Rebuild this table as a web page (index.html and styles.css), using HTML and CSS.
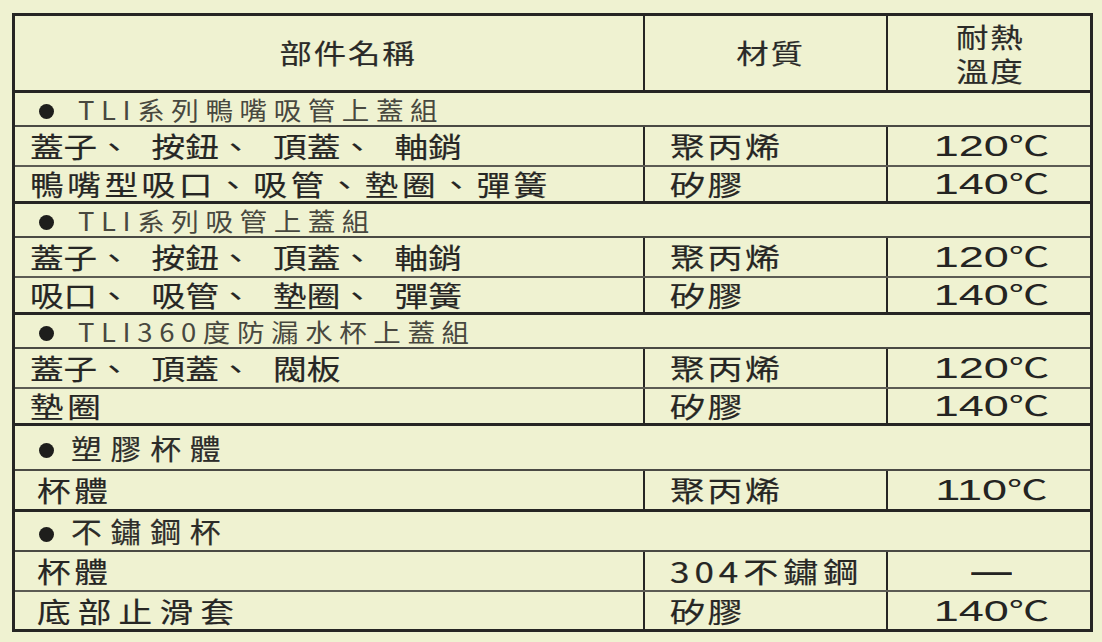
FILE: index.html
```html
<!DOCTYPE html>
<html lang="zh-Hant">
<head>
<meta charset="utf-8">
<title>部件材質表</title>
<link rel="stylesheet" href="styles.css">
</head>
<body>
<div class="page">
  <table class="spec">
    <colgroup><col class="c1"><col class="c2"><col class="c3"></colgroup>
    <thead>
      <tr>
        <th class="h-name"><span class="tx">部件名稱</span></th>
        <th class="h-mat"><span class="tx">材質</span></th>
        <th class="h-temp"><span class="tx line">耐熱</span><span class="tx line">溫度</span></th>
      </tr>
    </thead>
    <tbody>
      <tr class="sec"><td colspan="3"><span class="dot"></span><span class="tx">TLI系列鴨嘴吸管上蓋組</span></td></tr>
      <tr class="row"><td class="name tight"><span class="tx">蓋子、 按鈕、 頂蓋、 軸銷</span></td><td class="mat"><span class="tx">聚丙烯</span></td><td class="temp"><span class="tx">120<span class="deg">℃</span></span></td></tr>
      <tr class="row short"><td class="name wide"><span class="tx">鴨嘴型吸口、吸管、墊圈、彈簧</span></td><td class="mat"><span class="tx">矽膠</span></td><td class="temp"><span class="tx">140<span class="deg">℃</span></span></td></tr>

      <tr class="sec"><td colspan="3"><span class="dot"></span><span class="tx">TLI系列吸管上蓋組</span></td></tr>
      <tr class="row"><td class="name tight"><span class="tx">蓋子、 按鈕、 頂蓋、 軸銷</span></td><td class="mat"><span class="tx">聚丙烯</span></td><td class="temp"><span class="tx">120<span class="deg">℃</span></span></td></tr>
      <tr class="row short"><td class="name tight"><span class="tx">吸口、 吸管、 墊圈、 彈簧</span></td><td class="mat"><span class="tx">矽膠</span></td><td class="temp"><span class="tx">140<span class="deg">℃</span></span></td></tr>

      <tr class="sec"><td colspan="3"><span class="dot"></span><span class="tx">TLI360度防漏水杯上蓋組</span></td></tr>
      <tr class="row"><td class="name tight"><span class="tx">蓋子、 頂蓋、 閥板</span></td><td class="mat"><span class="tx">聚丙烯</span></td><td class="temp"><span class="tx">120<span class="deg">℃</span></span></td></tr>
      <tr class="row short"><td class="name wide"><span class="tx">墊圈</span></td><td class="mat"><span class="tx">矽膠</span></td><td class="temp"><span class="tx">140<span class="deg">℃</span></span></td></tr>

      <tr class="sec big tall"><td colspan="3"><span class="dot"></span><span class="tx">塑膠杯體</span></td></tr>
      <tr class="row"><td class="name wide indent"><span class="tx">杯體</span></td><td class="mat"><span class="tx">聚丙烯</span></td><td class="temp"><span class="tx">110<span class="deg">℃</span></span></td></tr>

      <tr class="sec big mid"><td colspan="3"><span class="dot"></span><span class="tx">不鏽鋼杯</span></td></tr>
      <tr class="row"><td class="name wide indent"><span class="tx">杯體</span></td><td class="mat steel"><span class="tx">304不鏽鋼</span></td><td class="temp"><span class="tx"><span class="dash">—</span></span></td></tr>
      <tr class="row last"><td class="name xwide indent"><span class="tx">底部止滑套</span></td><td class="mat"><span class="tx">矽膠</span></td><td class="temp"><span class="tx">140<span class="deg">℃</span></span></td></tr>
    </tbody>
  </table>
</div>
</body>
</html>
```
FILE: styles.css
```css
html, body {
  margin: 0;
  background: #eff2d1;
}

body {
  font-family: "Noto Sans CJK TC", "Noto Sans CJK SC", sans-serif;
  color: #262624;
}

.page {
  padding: 13px 0 0 12px;
}

.spec {
  border-collapse: collapse;
  table-layout: fixed;
  width: 1078px;
  border: 3px solid #262624;
}

col.c1 { width: 630px; }
col.c2 { width: 243px; }
col.c3 { width: 205px; }

.tx {
  display: inline-block;
  transform-origin: left center;
  white-space: nowrap;
}

/* header */
.spec th {
  font-weight: normal;
  font-size: 27px;
  letter-spacing: 1.5px;
  line-height: 34px;
  height: 72px;
  padding: 0;
  text-align: center;
  vertical-align: middle;
  border-left: 2px solid #262624;
  border-right: 2px solid #262624;
  border-bottom: 3px solid #262624;
  color: #2a2a28;
  -webkit-text-stroke: 0.2px #2a2a28;
}

.spec th .tx {
  transform-origin: center center;
  transform: scaleX(1.2);
}

.spec th .tx.line {
  display: block;
  height: 34px;
}

.spec th.h-name { padding-left: 38px; }
.spec th.h-mat { padding-left: 10px; }
.spec th.h-temp { padding-left: 2px; padding-top: 2px; }

/* body cells */
.spec td {
  padding: 0;
  vertical-align: middle;
  line-height: 1;
  white-space: nowrap;
  border-left: 2px solid #262624;
  border-right: 2px solid #262624;
  border-bottom: 2px solid #5c5c54;
}

.row td { height: 38px; }
.row.short td { height: 34px; }
.row.last td { height: 37px; }

/* section rows */
.sec td {
  height: 32px;
  padding-left: 24px;
  font-size: 25px;
  letter-spacing: 6px;
  color: #48483f;
  border-top: 3px solid #262624;
  border-bottom: 2px solid #4a4a44;
}

.sec .tx { transform: scaleX(1.1); }

.sec.big td {
  font-size: 28px;
  letter-spacing: 8px;
  color: #2c2c29;
  -webkit-text-stroke: 0.2px #2c2c29;
}

.sec.tall td { height: 43px; }
.sec.mid td { height: 38px; }

.dot {
  display: inline-block;
  width: 15px;
  height: 15px;
  border-radius: 50%;
  background: #1e1e1c;
  margin-right: 24px;
  vertical-align: middle;
  position: relative;
  top: -1px;
}

.sec.big .dot { margin-right: 17px; }

/* part names */
.name {
  font-size: 28px;
  padding-left: 15px !important;
  -webkit-text-stroke: 0.2px #262624;
}

.name .tx { transform: scaleX(1.2); }
.name.tight { letter-spacing: 0; word-spacing: 11px; }
.name.wide { letter-spacing: 3px; }
.name.xwide { letter-spacing: 6px; }
.name.indent { padding-left: 22px !important; }

/* material */
.mat {
  font-size: 28px;
  letter-spacing: 2px;
  padding-left: 25px !important;
  -webkit-text-stroke: 0.2px #262624;
}

.mat .tx { transform: scaleX(1.25); }
.mat.steel { letter-spacing: 4px; }

/* temperature */
.temp {
  font-family: "Liberation Sans", Arial, sans-serif;
  font-size: 30px;
  text-align: center;
  padding-left: 6px !important;
  color: #242422;
}

.temp .tx {
  transform-origin: center center;
  transform: scaleX(1.5);
}

.deg {
  font-family: "Noto Sans CJK TC", sans-serif;
  font-size: 27px;
}

.dash {
  font-family: "Liberation Sans", Arial, sans-serif;
  font-size: 27px;
  font-weight: 700;
}
```
